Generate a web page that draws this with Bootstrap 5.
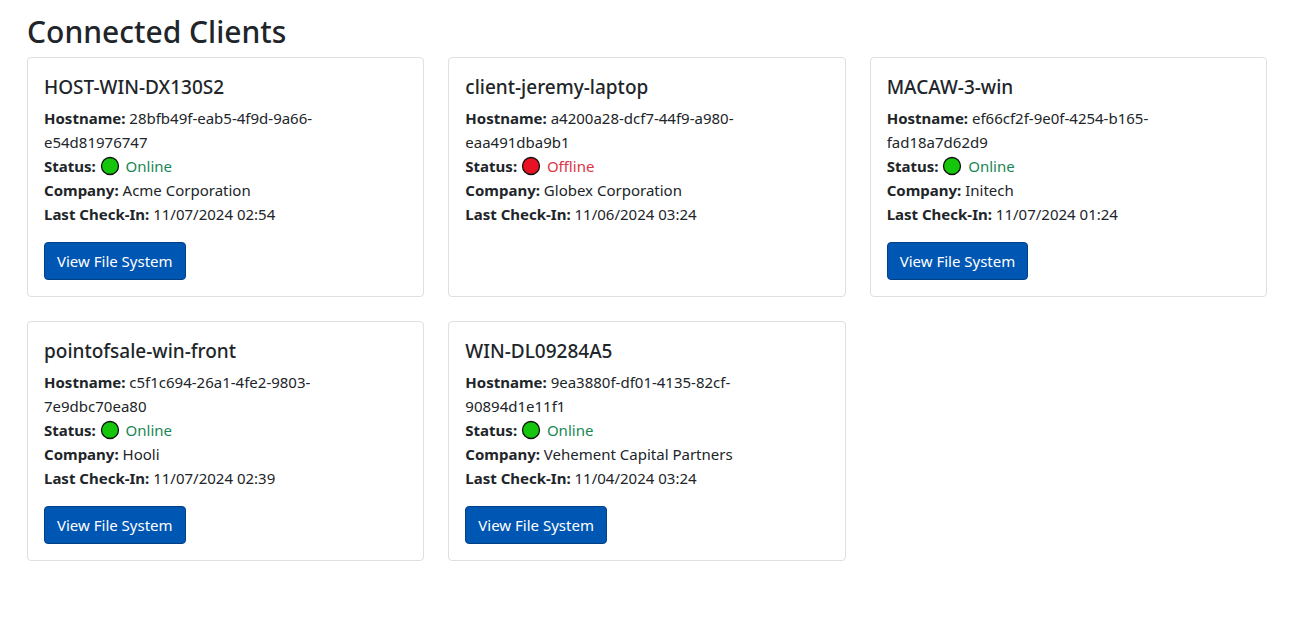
<!DOCTYPE html>
<html lang="en">
<head>
<meta charset="utf-8">
<meta name="viewport" content="width=device-width, initial-scale=1">
<title>Connected Clients</title>
<link href="https://cdn.jsdelivr.net/npm/bootstrap@5.3.0/dist/css/bootstrap.min.css" rel="stylesheet">
<style>
  body { font-family: "Segoe UI", "Noto Sans", "Open Sans", sans-serif; font-size: 15px; line-height: 24px; color: #212529; }
  .clients { padding: 12px 37px 0 27px; }
  .clients h2 { font-size: 30px; line-height: 40px; margin-bottom: 5px; }
  .clients .card { border-color: #dfdfdf; border-radius: 4px; }
  .clients .card-title { font-size: 19px; line-height: 26px; margin-bottom: 6px; }
  .btn-files { --bs-btn-color: #fff; --bs-btn-bg: #0056b3; --bs-btn-border-color: #004085;
    --bs-btn-hover-color: #fff; --bs-btn-hover-bg: #004085; --bs-btn-hover-border-color: #003064;
    --bs-btn-font-size: 15px; --bs-btn-line-height: 24px; --bs-btn-border-radius: 4px; }
  .status-dot { width: 20px; height: 20px; margin: -4px 2px 0 0; vertical-align: middle; }
  .dot-on { color: #16c60c; }
  .dot-off { color: #e81224; }
</style>
</head>
<body>
<svg class="d-none" aria-hidden="true">
  <symbol id="dot" viewBox="0 0 20 20"><circle cx="10" cy="10" r="8.5" fill="currentColor" stroke="#111" stroke-width="1.3"/></symbol>
</svg>
<main class="container-fluid clients">
  <h2>Connected Clients</h2>
  <div class="row row-cols-1 row-cols-md-2 row-cols-lg-3 gy-4">
    <div class="col"><div class="card h-100"><div class="card-body">
      <h5 class="card-title">HOST-WIN-DX130S2</h5>
      <p class="card-text pe-2"><strong>Hostname:</strong> 28bfb49f-eab5-4f9d-9a66-e54d81976747<br>
        <strong>Status:</strong> <svg class="status-dot dot-on"><use href="#dot"/></svg> <span class="text-success">Online</span><br>
        <strong>Company:</strong> Acme Corporation<br>
        <strong>Last Check-In:</strong> 11/07/2024 02:54</p>
      <button type="button" class="btn btn-files">View File System</button>
    </div></div></div>
    <div class="col"><div class="card h-100"><div class="card-body">
      <h5 class="card-title">client-jeremy-laptop</h5>
      <p class="card-text pe-2"><strong>Hostname:</strong> a4200a28-dcf7-44f9-a980-eaa491dba9b1<br>
        <strong>Status:</strong> <svg class="status-dot dot-off"><use href="#dot"/></svg> <span class="text-danger">Offline</span><br>
        <strong>Company:</strong> Globex Corporation<br>
        <strong>Last Check-In:</strong> 11/06/2024 03:24</p>
    </div></div></div>
    <div class="col"><div class="card h-100"><div class="card-body">
      <h5 class="card-title">MACAW-3-win</h5>
      <p class="card-text pe-2"><strong>Hostname:</strong> ef66cf2f-9e0f-4254-b165-fad18a7d62d9<br>
        <strong>Status:</strong> <svg class="status-dot dot-on"><use href="#dot"/></svg> <span class="text-success">Online</span><br>
        <strong>Company:</strong> Initech<br>
        <strong>Last Check-In:</strong> 11/07/2024 01:24</p>
      <button type="button" class="btn btn-files">View File System</button>
    </div></div></div>
    <div class="col"><div class="card h-100"><div class="card-body">
      <h5 class="card-title">pointofsale-win-front</h5>
      <p class="card-text pe-2"><strong>Hostname:</strong> c5f1c694-26a1-4fe2-9803-7e9dbc70ea80<br>
        <strong>Status:</strong> <svg class="status-dot dot-on"><use href="#dot"/></svg> <span class="text-success">Online</span><br>
        <strong>Company:</strong> Hooli<br>
        <strong>Last Check-In:</strong> 11/07/2024 02:39</p>
      <button type="button" class="btn btn-files">View File System</button>
    </div></div></div>
    <div class="col"><div class="card h-100"><div class="card-body">
      <h5 class="card-title">WIN-DL09284A5</h5>
      <p class="card-text pe-2"><strong>Hostname:</strong> 9ea3880f-df01-4135-82cf-90894d1e11f1<br>
        <strong>Status:</strong> <svg class="status-dot dot-on"><use href="#dot"/></svg> <span class="text-success">Online</span><br>
        <strong>Company:</strong> Vehement Capital Partners<br>
        <strong>Last Check-In:</strong> 11/04/2024 03:24</p>
      <button type="button" class="btn btn-files">View File System</button>
    </div></div></div>
  </div>
</main>
<script src="https://cdn.jsdelivr.net/npm/bootstrap@5.3.0/dist/js/bootstrap.bundle.min.js"></script>
</body>
</html>
